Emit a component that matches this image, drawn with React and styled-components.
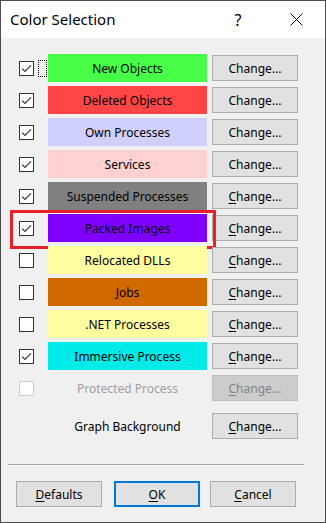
import React from 'react';
import styled, { createGlobalStyle } from 'styled-components';

const Global = createGlobalStyle`
  html, body { margin: 0; padding: 0; background: #f0f0f0; }
  body { font-family: "Noto Sans", "Open Sans", sans-serif; }
`;

const Window = styled.div`
  box-sizing: border-box;
  width: 326px;
  height: 523px;
  border: 1px solid #4d4d4d;
  background: #f0f0f0;
  display: flex;
  flex-direction: column;
  color: #000;
`;

const TitleBar = styled.div`
  height: 37px;
  background: #fff;
  display: flex;
  align-items: center;
  padding-left: 9px;
  padding-right: 6px;
`;

const Title = styled.div`
  flex: 1;
  font-size: 15px;
  color: #000;
  padding-bottom: 1px;
`;

const TitleButton = styled.div`
  width: 46px;
  height: 37px;
  margin-right: ${({ $mr }) => $mr || 0}px;
  display: flex;
  align-items: center;
  justify-content: center;
  font-size: 16px;
`;

const Content = styled.div`
  display: flex;
  flex-direction: column;
  gap: 4px;
  padding-top: 16px;
`;

const Row = styled.div`
  position: relative;
  display: flex;
  align-items: center;
  height: 28px;
  padding-left: 18px;
  margin-top: ${({ $extra }) => $extra || 0}px;
`;

const Box = styled.div`
  box-sizing: border-box;
  width: 15px;
  height: 15px;
  border: 1px solid ${({ $disabled }) => ($disabled ? '#cccccc' : '#333333')};
  background: #fff;
  display: flex;
  align-items: center;
  justify-content: center;
  visibility: ${({ $hidden }) => ($hidden ? 'hidden' : 'visible')};
`;

const FocusSlot = styled.div`
  box-sizing: border-box;
  width: 9px;
  height: 17px;
  margin-left: 4px;
  margin-right: 1px;
  border: 1px dotted ${({ $on }) => ($on ? '#000' : 'transparent')};
`;

const Swatch = styled.div`
  width: 159px;
  height: 28px;
  background: ${({ $bg }) => $bg || 'transparent'};
  color: ${({ $muted }) => ($muted ? '#a0a0a0' : '#000')};
  display: flex;
  align-items: center;
  justify-content: center;
  font-size: 12px;
  white-space: nowrap;
`;

const Button = styled.div`
  box-sizing: border-box;
  width: 86px;
  height: 26px;
  margin-left: ${({ $ml }) => $ml ?? 5}px;
  background: ${({ $disabled }) => ($disabled ? '#cccccc' : '#e1e1e1')};
  border: ${({ $default }) => ($default ? '2px solid #0078d7' : '1px solid #adadad')};
  border-color: ${({ $disabled }) => ($disabled ? '#bfbfbf' : undefined)};
  color: ${({ $disabled }) => ($disabled ? '#838383' : '#000')};
  display: flex;
  align-items: center;
  justify-content: center;
  font-size: 12px;
  u { text-decoration-thickness: 1px; text-underline-offset: 2px; }
`;

const Highlight = styled.div`
  position: absolute;
  left: 9px;
  top: -4px;
  width: 206px;
  height: 39px;
  box-sizing: border-box;
  border: 3px solid #e8202a;
  pointer-events: none;
`;

const Separator = styled.div`
  margin: 24px 0 0 7px;
  width: 296px;
  height: 1px;
  background: #a0a0a0;
  border-bottom: 1px solid #fff;
`;

const Footer = styled.div`
  display: flex;
  padding-left: 15px;
  margin-top: 15px;
`;

const Check = ({ color = '#333' }) => (
  <svg width="11" height="9" viewBox="0 0 11 9">
    <path d="M1 4.6 L4 7.4 L10 1.4" fill="none" stroke={color} strokeWidth="1.2" />
  </svg>
);

const rows = [
  { label: 'New Objects', bg: '#46ff46', checked: true, focus: true },
  { label: 'Deleted Objects', bg: '#ff4646', checked: true },
  { label: 'Own Processes', bg: '#d0d0ff', checked: true },
  { label: 'Services', bg: '#ffd0d0', checked: true },
  { label: 'Suspended Processes', bg: '#808080', checked: true, u: true },
  { label: 'Packed Images', bg: '#8000ff', checked: true, u: true, mark: true },
  { label: 'Relocated DLLs', bg: '#ffffa0', u: true },
  { label: 'Jobs', bg: '#d06a00', u: true },
  { label: '.NET Processes', bg: '#ffffa0', u: true },
  { label: 'Immersive Process', bg: '#00eaea', checked: true, u: true },
  { label: 'Protected Process', disabled: true, u: true },
];

const ChangeLabel = ({ u }) => (u ? <span><u>C</u>hange...</span> : <span>Change...</span>);

export default function App() {
  return (
    <>
      <Global />
      <Window>
        <TitleBar>
          <Title>Color Selection</Title>
          <TitleButton $mr={12}>?</TitleButton>
          <TitleButton>
            <svg width="13" height="13" viewBox="0 0 13 13">
              <path d="M0.5 0.5 L12.5 12.5 M12.5 0.5 L0.5 12.5" stroke="#000" strokeWidth="1" />
            </svg>
          </TitleButton>
        </TitleBar>
        <Content>
          {rows.map((r) => (
            <Row key={r.label}>
              <Box $disabled={r.disabled}>{r.checked && <Check />}</Box>
              <FocusSlot $on={r.focus} />
              <Swatch $bg={r.bg} $muted={r.disabled}>{r.label}</Swatch>
              <Button $disabled={r.disabled}>
                <ChangeLabel u={r.u} />
              </Button>
              {r.mark && <Highlight />}
            </Row>
          ))}
          <Row $extra={6}>
            <Box $hidden />
            <FocusSlot />
            <Swatch>Graph Background</Swatch>
            <Button>
              <ChangeLabel u />
            </Button>
          </Row>
        </Content>
        <Separator />
        <Footer>
          <Button $ml={0}><span><u>D</u>efaults</span></Button>
          <Button $ml={12} $default><span><u>O</u>K</span></Button>
          <Button $ml={10}><span><u>C</u>ancel</span></Button>
        </Footer>
      </Window>
    </>
  );
}
